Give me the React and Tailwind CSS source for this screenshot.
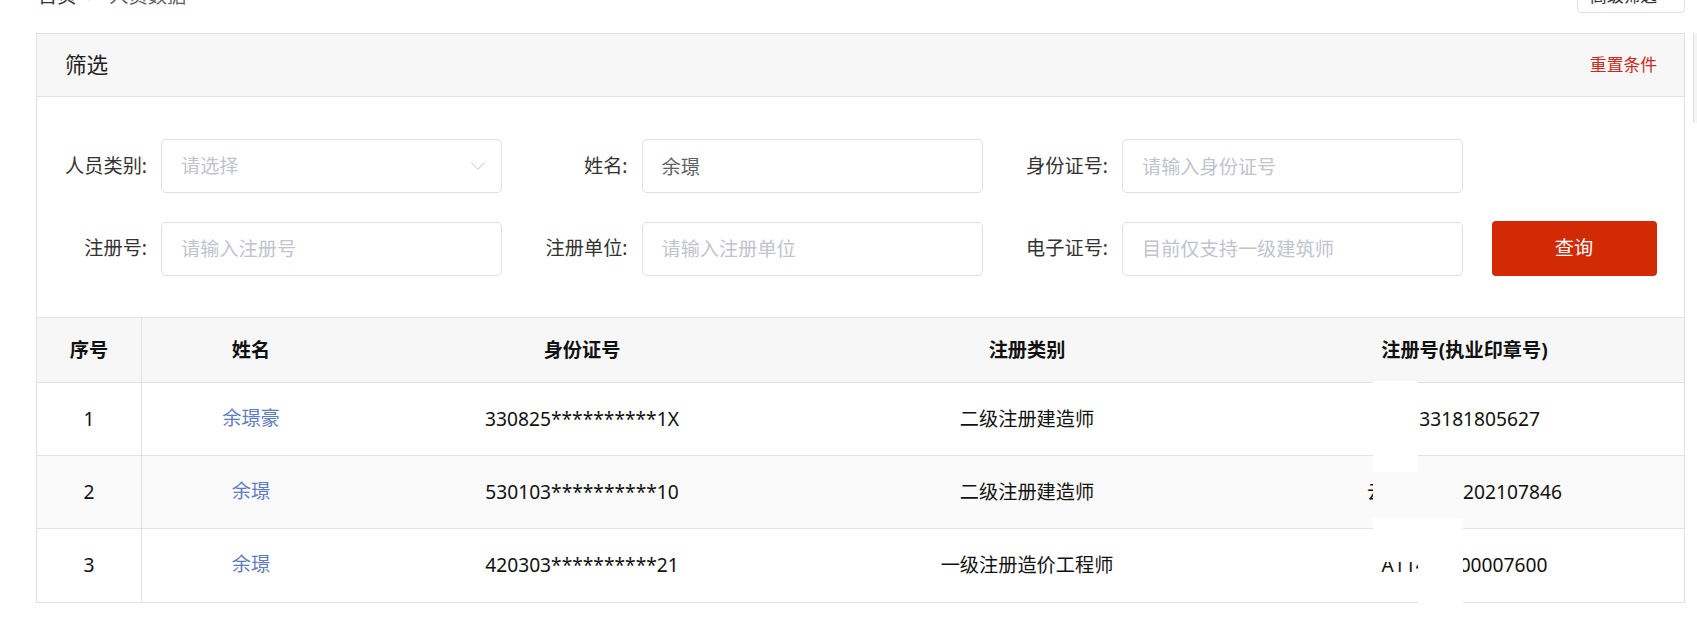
import React from 'react';
import { ChevronDown } from 'lucide-react';

const ROWS = [
  { no: 1, name: '余璟豪', idCard: '330825**********1X', type: '二级注册建造师', regNo: '浙133181805627' },
  { no: 2, name: '余璟', idCard: '530103**********10', type: '二级注册建造师', regNo: '云5312017202107846', striped: true },
  { no: 3, name: '余璟', idCard: '420303**********21', type: '一级注册造价工程师', regNo: 'A11440000007600' },
];

const Field = ({ label, children }) => (
  <div className="flex items-center w-[465px] shrink-0">
    <span className="w-[124px] shrink-0 pr-[14px] text-right text-[#333]">{label}</span>
    {children}
  </div>
);

const TextInput = ({ placeholder, value }) => (
  <input
    className="w-[341px] h-[54px] border border-[#dcdfe6] rounded-[5px] pl-[19px] pr-3 outline-none bg-white text-[#606266] placeholder:text-[#c0c4cc]"
    placeholder={placeholder}
    defaultValue={value}
  />
);

const App = () => {
  return (
    <div className="w-full h-[631px] overflow-hidden bg-white flex font-['Noto_Sans','Noto_Sans_CJK_SC',sans-serif] text-[19.2px]">
      <div className="flex-1 pl-[36px] pr-[8px]">
        {/* breadcrumb + top action, mostly scrolled out of view */}
        <div className="h-[33px] flex justify-between items-start">
          <div className="-mt-[14px] ml-[2px] flex items-center leading-[20px]">
            <span className="text-[#303133]">首页</span>
            <span className="mx-[11px] text-[#c0c4cc]">&gt;</span>
            <span className="text-[#606266]">人员数据</span>
          </div>
          <button className="-mt-[23px] h-[36px] w-[108px] border border-[#dcdfe6] rounded-b-[4px] bg-white text-[16.8px] leading-[17px] pl-[12px] text-left text-[#333]">
            高级筛选
          </button>
        </div>

        <div className="border border-[#e2e2e2]">
          <div className="h-[63px] bg-[#f7f7f7] border-b border-[#e2e2e2] flex items-center justify-between pl-[28px] pr-[27px]">
            <span className="text-[21.6px] text-[#222]">筛选</span>
            <span className="text-[16.8px] text-[#c9291b] cursor-pointer">重置条件</span>
          </div>

          <div className="pt-[42px] pb-[41px] border-b border-[#e2e2e2] flex flex-col gap-[28px]">
            <div className="flex items-center gap-[15.5px]">
              <Field label="人员类别:">
                <div className="w-[341px] h-[54px] border border-[#dcdfe6] rounded-[5px] pl-[19px] pr-[10px] flex items-center justify-between">
                  <span className="text-[#c0c4cc]">请选择</span>
                  <ChevronDown size={26} strokeWidth={0.9} className="text-[#c0c4cc]" />
                </div>
              </Field>
              <Field label="姓名:">
                <TextInput placeholder="请输入姓名" value="余璟" />
              </Field>
              <Field label="身份证号:">
                <TextInput placeholder="请输入身份证号" />
              </Field>
            </div>
            <div className="flex items-center gap-[15.5px]">
              <Field label="注册号:">
                <TextInput placeholder="请输入注册号" />
              </Field>
              <Field label="注册单位:">
                <TextInput placeholder="请输入注册单位" />
              </Field>
              <Field label="电子证号:">
                <TextInput placeholder="目前仅支持一级建筑师" />
              </Field>
              <button className="ml-[13px] w-[165px] h-[55px] rounded-[4px] bg-[#d12a05] text-white">查询</button>
            </div>
          </div>

          <div className="relative">
            <div className="grid grid-cols-[105px_218px_444px_446px_1fr] h-[65px] bg-[#f7f7f7] border-b border-[#e2e2e2] font-bold text-[#111]">
              <div className="flex items-center justify-center border-r border-[#e2e2e2]">序号</div>
              <div className="flex items-center justify-center">姓名</div>
              <div className="flex items-center justify-center">身份证号</div>
              <div className="flex items-center justify-center">注册类别</div>
              <div className="flex items-center justify-center pr-[5px]">注册号(执业印章号)</div>
            </div>
            {ROWS.map((row, i) => (
              <div
                key={row.no}
                className={`grid grid-cols-[105px_218px_444px_446px_1fr] h-[73px] text-[#111] ${i < ROWS.length - 1 ? 'border-b border-[#e2e2e2]' : ''} ${row.striped ? 'bg-[#fafafa]' : 'bg-white'}`}
              >
                <div className="flex items-center justify-center border-r border-[#e2e2e2]">{row.no}</div>
                <div className="flex items-center justify-center text-[#5f7cc0] font-['Liberation_Serif','Noto_Sans_CJK_SC',serif]">{row.name}</div>
                <div className="flex items-center justify-center">{row.idCard}</div>
                <div className="flex items-center justify-center">{row.type}</div>
                <div className="flex items-center justify-center whitespace-nowrap pr-[5px]">{row.regNo}</div>
              </div>
            ))}

            {/* masking blocks over the registration numbers */}
            <div className="absolute left-[1336px] top-[63px] w-[45px] h-[91px] bg-white" />
            <div className="absolute left-[1336px] top-[154px] w-[90px] h-[46px] bg-[#fafafa]" />
            <div className="absolute left-[1336px] top-[200px] w-[90px] h-[44px] bg-white" />
            <div className="absolute left-[1381px] top-[200px] w-[45px] h-[85px] bg-white" />
          </div>
        </div>
      </div>

      <div className="w-[4px] shrink-0 pt-[33px]">
        <div className="h-[90px] border-l border-[#e0e0e0] bg-[#f4f4f4]" />
      </div>
    </div>
  );
};

export default App;
